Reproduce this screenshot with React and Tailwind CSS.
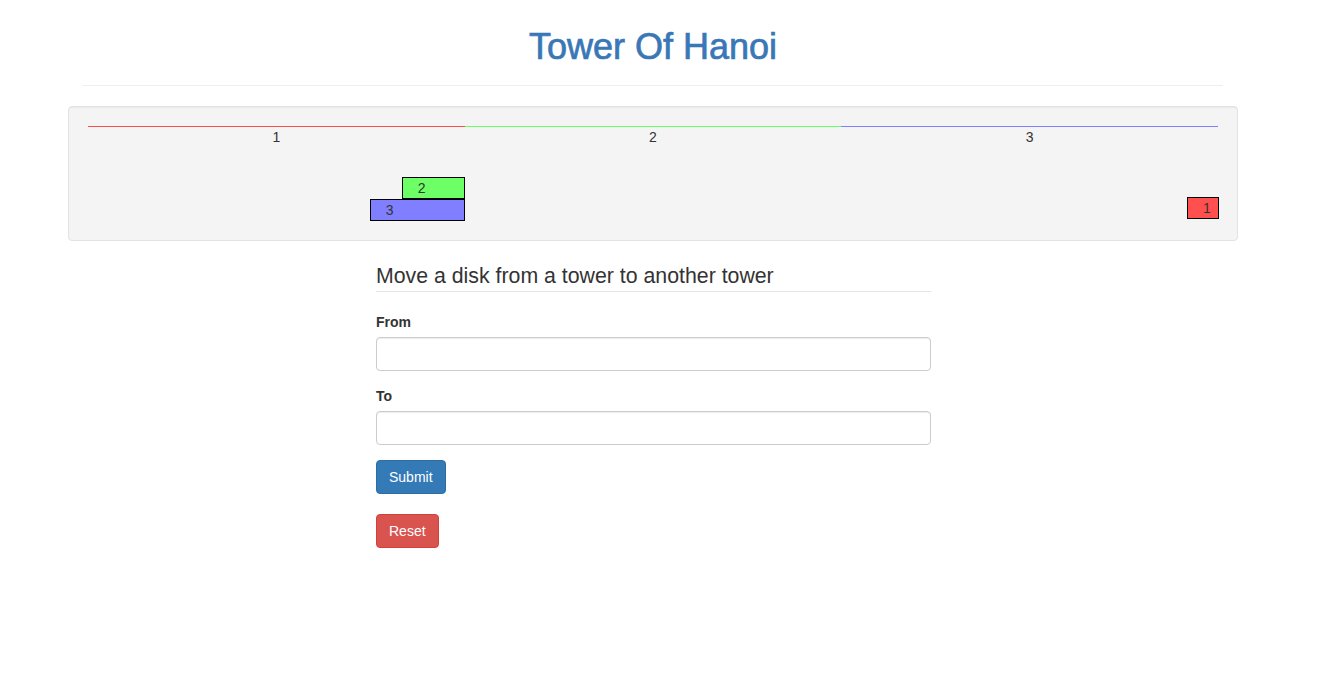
import React from "react";

function Disk({ n, color, width }) {
  return (
    <div
      className={`h-[22px] border border-black pl-[15px] text-[14px] leading-[20px] text-[#333] ${color} ${width}`}
    >
      {n}
    </div>
  );
}

export default function App() {
  return (
    <div className="min-h-[684px] bg-white text-[#333] font-['Liberation_Sans',Arial,sans-serif] text-[14px]">
      <div className="ml-[68px] w-[1170px]">
        <div className="mx-[15px] pt-[27px] pb-[18px] border-b border-[#eee]">
          <h1 className="text-center text-[36px] leading-[40px] text-[#3a77b6] font-medium [-webkit-text-stroke:0.7px_#3a77b6]">
            Tower Of Hanoi
          </h1>
        </div>

        <div className="mt-[20px] rounded-[4px] border border-[#e3e3e3] bg-[#f4f4f4] p-[19px] shadow-[inset_0_1px_1px_rgba(0,0,0,0.05)]">
          <div className="grid grid-cols-3">
            <div className="flex flex-col">
              <div className="border-t border-[#ff4d4d] h-[21px] text-center leading-[20px]">1</div>
              <div className="h-[74px] flex flex-col items-end justify-end">
                <Disk n="2" color="bg-[#6cff66]" width="w-[63px]" />
                <Disk n="3" color="bg-[#7f7fff]" width="w-[95px]" />
              </div>
            </div>
            <div className="flex flex-col">
              <div className="border-t border-[#66ff66] h-[21px] text-center leading-[20px]">2</div>
              <div className="h-[74px]"></div>
            </div>
            <div className="flex flex-col">
              <div className="border-t border-[#7f7fff] h-[21px] text-center leading-[20px]">3</div>
              <div className="h-[74px] flex flex-col items-end justify-end pb-[2px] -mr-px">
                <Disk n="1" color="bg-[#ff4f4f]" width="w-[32px]" />
              </div>
            </div>
          </div>
        </div>

        <form className="ml-[308px] w-[555px] mt-[20px]" onSubmit={(e) => e.preventDefault()}>
          <div className="text-[21.3px] leading-[30px] border-b border-[#e5e5e5] text-[#333]">
            Move a disk from a tower to another tower
          </div>
          <div className="mt-[20px] mb-[15px]">
            <label className="block font-bold leading-[20px] mb-[5px]">From</label>
            <input
              type="text"
              className="block w-full h-[34px] rounded-[4px] border border-[#ccc] bg-white px-[12px] shadow-[inset_0_1px_1px_rgba(0,0,0,0.075)] outline-none"
            />
          </div>
          <div className="mb-[15px]">
            <label className="block font-bold leading-[20px] mb-[5px]">To</label>
            <input
              type="text"
              className="block w-full h-[34px] rounded-[4px] border border-[#ccc] bg-white px-[12px] shadow-[inset_0_1px_1px_rgba(0,0,0,0.075)] outline-none"
            />
          </div>
          <div className="flex flex-col items-start gap-[20px]">
            <button
              type="submit"
              className="h-[34px] px-[12px] rounded-[4px] border border-[#2e6da4] bg-[#337ab7] text-white text-[14px] leading-[20px]"
            >
              Submit
            </button>
            <button
              type="button"
              className="h-[34px] px-[12px] rounded-[4px] border border-[#d43f3a] bg-[#d9534f] text-white text-[14px] leading-[20px]"
            >
              Reset
            </button>
          </div>
        </form>
      </div>
    </div>
  );
}
